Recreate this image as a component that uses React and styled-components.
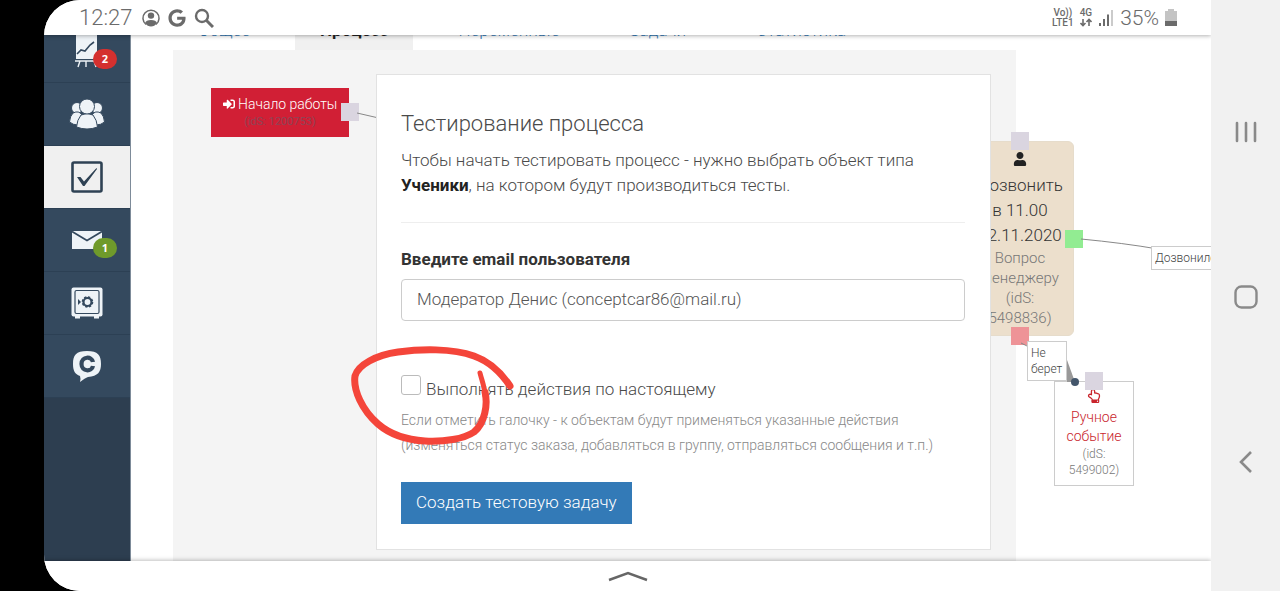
import React, { useState } from "react";
import styled, { createGlobalStyle, ThemeProvider } from "styled-components";
import { FaGoogle, FaUser, FaSignInAlt, FaRegHandPointUp } from "react-icons/fa";

const theme = {
  text: "#4a4a4a",
  muted: "#888",
  link: "#337ab7",
  danger: "#d11f35",
  menu: "#34495e",
  menuDark: "#2d3e50",
  system: "#6b6b6b"
};

const GlobalStyle = createGlobalStyle`
  * {
    box-sizing: border-box;
  }

  body {
    margin: 0;
    background: #000;
    font-family: Roboto, "Noto Sans", sans-serif;
    font-weight: 300;
  }
`;

const Device = styled.div`
  display: flex;
  height: 100vh;
  padding-left: 44px;
  background: #000;
  overflow: hidden;
`;

const Screen = styled.div`
  position: relative;
  flex: 1;
  min-width: 0;
  display: flex;
  flex-direction: column;
  background: #fff;
  border-radius: 36px 0 0 36px;
  overflow: hidden;
`;

const StatusBar = styled.header`
  position: relative;
  z-index: 3;
  flex: none;
  display: flex;
  align-items: center;
  justify-content: space-between;
  height: 35px;
  padding: 0 34px 0 35px;
  background: #fff;
  color: ${props => props.theme.system};
  box-shadow: 0 1px 4px rgba(0, 0, 0, 0.3);
`;

const StatusGroup = styled.div`
  display: flex;
  align-items: center;
  gap: ${props => props.$gap}px;
`;

const Clock = styled.time`
  font-size: 22px;
  margin-right: 2px;
`;

const Percent = styled.span`
  font-size: 21px;
`;

const Carrier = styled.span`
  display: flex;
  flex-direction: column;
  align-items: center;
  font-size: 10px;
  font-weight: 500;
  line-height: 10px;
`;

const Viewport = styled.div`
  flex: 1;
  min-height: 0;
  display: flex;
  overflow: hidden;
`;

const Sidebar = styled.nav`
  flex: none;
  width: 87px;
  background: ${props => props.theme.menuDark};
  border-right: 1px solid #7d8b99;
`;

const MenuList = styled.div`
  margin-top: -15px;
`;

const MenuItem = styled.a`
  display: flex;
  align-items: center;
  justify-content: center;
  height: 63px;
  background: ${props => (props.$active ? "#f0f0f0" : props.theme.menu)};
  border-bottom: 1px solid #2c4054;
`;

const MenuIcon = styled.span`
  position: relative;
  display: flex;
`;

const Badge = styled.span`
  position: absolute;
  left: 22px;
  bottom: ${props => props.$drop}px;
  width: 24px;
  height: 20px;
  border-radius: 10px;
  background: ${props => props.$color};
  color: #fff;
  font: 700 11px/20px "Open Sans", sans-serif;
  text-align: center;
`;

const Page = styled.main`
  flex: 1;
  min-width: 0;
  margin-top: -27px;
  padding: 0 195px 0 42px;
`;

const Tabs = styled.div`
  display: flex;
  gap: 20px;
  height: 42px;
`;

const Tab = styled.a`
  padding: 0 25px;
  font-size: 17px;
  line-height: 45px;
  white-space: nowrap;
  text-decoration: none;
  font-weight: ${props => (props.$active ? 700 : 300)};
  color: ${props => (props.$active ? "#222" : props.theme.link)};
  background: ${props => (props.$active ? "#f0f0f0" : "none")};
`;

const Canvas = styled.section`
  position: relative;
  min-height: 560px;
  background: #f4f4f4;
`;

const Wires = styled.svg`
  position: absolute;
  left: 0;
  top: 0;
  overflow: visible;
`;

const Node = styled.div`
  position: absolute;
  left: ${props => props.$x}px;
  top: ${props => props.$y}px;
  width: ${props => props.$w}px;
  text-align: center;
`;

const StartNode = styled(Node)`
  height: 49px;
  padding-top: 6px;
  background: ${props => props.theme.danger};
  color: #fff;
  font-size: 14px;
  line-height: 20px;

  svg {
    vertical-align: -1px;
  }
`;

const StartId = styled.div`
  color: #8f4455;
  font-size: 11px;
  font-weight: 400;
  line-height: 16px;
`;

const QuestionNode = styled(Node)`
  padding: 6px 10px 7px;
  border-radius: 6px;
  border: 1px solid #e6dccb;
  background: #ecdfcc;
  color: #333;
  font-size: 17px;
  line-height: 25px;
`;

const QuestionInfo = styled.div`
  color: #777;
  font-size: 15px;
  line-height: 20px;
`;

const ManualNode = styled(Node)`
  padding: 7px 8px;
  border: 1px solid #ccc;
  background: #fff;
  color: #c9252d;
  font-size: 14px;
  line-height: 19px;
`;

const ManualId = styled.div`
  color: #777;
  font-size: 12px;
  line-height: 16px;
`;

const WireLabel = styled(Node)`
  padding: 3px;
  border: 1px solid #ccc;
  background: #fff;
  color: #444;
  font-size: 12px;
  line-height: 16px;
  text-align: left;
`;

const Port = styled.i`
  position: absolute;
  left: ${props => props.$x}px;
  top: ${props => props.$y}px;
  width: 18px;
  height: 18px;
  background: ${props => props.$color || "#dad5e0"};
`;

const Modal = styled.form`
  position: absolute;
  z-index: 1;
  top: 24px;
  left: 203px;
  right: 25px;
  padding: 36px 25px 25px 24px;
  border: 1px solid #e2e2e2;
  background: #fff;
  color: ${props => props.theme.text};
  font-size: 17px;
  line-height: 25px;
`;

const Title = styled.h1`
  margin: 0 0 12px;
  font-size: 22px;
  font-weight: 300;
  line-height: 25px;
`;

const Lead = styled.p`
  margin: 0;

  b {
    color: #222;
    font-weight: 700;
  }
`;

const Divider = styled.hr`
  margin: 24px 0;
  border: 0;
  border-top: 1px solid #eee;
`;

const FieldLabel = styled.label`
  display: block;
  margin-bottom: 7px;
  color: #333;
  font-weight: 700;
`;

const TextField = styled.input`
  display: block;
  width: 100%;
  height: 42px;
  padding: 0 15px 2px;
  border: 1px solid #ccc;
  border-radius: 4px;
  background: #fff;
  color: #555;
  font: inherit;
`;

const CheckRow = styled.div`
  display: flex;
  gap: 5px;
  margin-top: 54px;

  label {
    padding-top: 2px;
  }
`;

const CheckBox = styled.input`
  appearance: none;
  flex: none;
  width: 20px;
  height: 20px;
  margin: 0;
  border: 1px solid #bbb;
  border-radius: 3px;
  background: #fff;

  &:checked {
    background: ${props => props.theme.link};
  }
`;

const Help = styled.p`
  margin: 6px 0 24px;
  color: ${props => props.theme.muted};
  font-size: 14px;
`;

const Submit = styled.button`
  display: block;
  height: 42px;
  padding: 0 15px 2px;
  border: 0;
  background: ${props => props.theme.link};
  color: #fff;
  font: inherit;
`;

const BottomBar = styled.footer`
  position: relative;
  z-index: 3;
  flex: none;
  display: flex;
  align-items: center;
  justify-content: center;
  height: 30px;
  background: #fff;
  box-shadow: 0 -1px 4px rgba(0, 0, 0, 0.25);
`;

const NavBar = styled.nav`
  flex: none;
  display: flex;
  flex-direction: column;
  align-items: center;
  justify-content: space-between;
  width: 69px;
  padding: 112px 0 109px;
  background: #f1f1f1;
`;

const NavButton = styled.button`
  display: flex;
  align-items: center;
  justify-content: center;
  width: 40px;
  height: 40px;
  padding: 0;
  border: 0;
  background: none;
`;

const Marker = styled.svg`
  position: absolute;
  z-index: 2;
  left: 300px;
  top: 335px;
  pointer-events: none;
`;

const menu = [
  { id: "stats", label: "Статистика", icon: <BoardIcon />, badge: 2, color: "#d4302f", drop: 1 },
  { id: "users", label: "Пользователи", icon: <UsersIcon /> },
  { id: "tasks", label: "Задачи", icon: <TaskIcon />, active: true },
  { id: "mail", label: "Сообщения", icon: <MailIcon />, badge: 1, color: "#6f9a2b", drop: -8 },
  { id: "safe", label: "Продажи", icon: <SafeIcon /> },
  { id: "chat", label: "Чат", icon: <ChatIcon /> }
];

const tabs = ["Общее", "Процесс", "Переменные", "Задачи", "Статистика"];

export default function App() {
  return (
    <ThemeProvider theme={theme}>
      <GlobalStyle />
      <Device>
        <Screen>
          <Status />
          <Viewport>
            <Sidebar>
              <MenuList>
                {menu.map(item => (
                  <MenuItem key={item.id} href={"#" + item.id} aria-label={item.label} $active={item.active}>
                    <MenuIcon>
                      {item.icon}
                      {item.badge && <Badge $color={item.color} $drop={item.drop}>{item.badge}</Badge>}
                    </MenuIcon>
                  </MenuItem>
                ))}
              </MenuList>
            </Sidebar>
            <Page>
              <Tabs>
                {tabs.map(name => (
                  <Tab key={name} href="#tab" $active={name === "Процесс"}>{name}</Tab>
                ))}
              </Tabs>
              <Canvas>
                <Process />
                <TestForm />
              </Canvas>
            </Page>
          </Viewport>
          <BottomBar>
            <svg width="40" height="12" viewBox="0 0 40 12" fill="none" stroke="#666" strokeWidth="2.4">
              <path d="M1 10 L20 3 L39 10" />
            </svg>
          </BottomBar>
          <Marker width="180" height="120" viewBox="344 335 180 120" fill="none" stroke="#f4453a" strokeLinecap="round" strokeLinejoin="round">
            <path strokeWidth="7" d="M510 386 C502 374 491 362 474 356 C452 348 420 349 398 352 C376 355 358 365 355 376 C353 390 362 410 378 424 C392 436 408 440 425 441 C444 442 464 439 474 432 C485 423 488 404 485 392" />
            <path strokeWidth="5" d="M485 396 C485 388 482 381 480 373" />
          </Marker>
        </Screen>
        <NavBar>
          <NavButton aria-label="Недавние">
            <svg width="24" height="24" fill="none" stroke="#8a8a8a" strokeWidth="2.6" strokeLinecap="round">
              <path d="M3 3V21M12 3V21M21 3V21" />
            </svg>
          </NavButton>
          <NavButton aria-label="Домой">
            <svg width="26" height="26" fill="none" stroke="#8a8a8a" strokeWidth="2.4">
              <rect x="2.5" y="2.5" width="21" height="21" rx="6" />
            </svg>
          </NavButton>
          <NavButton aria-label="Назад">
            <svg width="24" height="24" fill="none" stroke="#8a8a8a" strokeWidth="2.6">
              <path d="M17 2 L7 12 L17 22" />
            </svg>
          </NavButton>
        </NavBar>
      </Device>
    </ThemeProvider>
  );
}

function Status() {
  return (
    <StatusBar>
      <StatusGroup $gap={8}>
        <Clock>12:27</Clock>
        <svg width="18" height="18" viewBox="0 0 18 18" fill="currentColor">
          <path d="M4 15.5 A8 8 0 1 1 14 15.5" fill="none" stroke="currentColor" strokeWidth="1.5" />
          <circle cx="9" cy="6.6" r="3.2" />
          <path d="M3 14 Q4 11 9 11 Q14 11 15 14 Q12.5 17.5 9 17.5 Q5.5 17.5 3 14Z" />
        </svg>
        <FaGoogle size={18} />
        <svg width="20" height="20" fill="none" stroke="currentColor" strokeWidth="2.4">
          <circle cx="8" cy="8" r="6" />
          <path d="M12.5 12.5 L19 19" strokeWidth="3" />
        </svg>
      </StatusGroup>
      <StatusGroup $gap={6}>
        <Carrier><span>Vo))</span><span>LTE1</span></Carrier>
        <Carrier>
          <span>4G</span>
          <svg width="12" height="9" fill="none" stroke="currentColor" strokeWidth="1.6">
            <path d="M3 1V7.5M0.5 5L3 7.5L5.5 5M9 8V1.5M6.5 4L9 1.5L11.5 4" />
          </svg>
        </Carrier>
        <svg width="16" height="18" fill="currentColor">
          <path d="M1 14h2v3H1zM5 10h2v7H5zM9 5.5h2V17H9z" />
          <path d="M13 1h2v16h-2z" opacity=".35" />
        </svg>
        <Percent>35%</Percent>
        <svg width="12" height="18" fill="currentColor">
          <path d="M0 2H3V0H9V2H12V12H0z" opacity=".4" />
          <path d="M0 12H12V17H0z" />
        </svg>
      </StatusGroup>
    </StatusBar>
  );
}

function Process() {
  return (
    <>
      <StartNode $x={38} $y={38} $w={138}>
        <FaSignInAlt size={12} /> Начало работы
        <StartId>(idS: 1200753)</StartId>
      </StartNode>
      <QuestionNode $x={793} $y={91} $w={108}>
        <FaUser size={14} color="#222" />
        <div>Дозвонить</div>
        <div>в 11.00</div>
        <div>12.11.2020</div>
        <QuestionInfo>Вопрос менеджеру (idS: 5498836)</QuestionInfo>
      </QuestionNode>
      <ManualNode $x={881} $y={331} $w={80}>
        <FaRegHandPointUp size={14} />
        <div>Ручное событие</div>
        <ManualId>(idS: 5499002)</ManualId>
      </ManualNode>
      <Port $x={168} $y={53} />
      <Port $x={838} $y={82} />
      <Port $x={892} $y={180} $color="#92ec92" />
      <Port $x={838} $y={277} $color="#ee9397" />
      <Port $x={912} $y={322} />
      <Wires width="10" height="10" fill="none" stroke="#888">
        <path d="M184 63 L210 69" />
        <path d="M908 189 Q950 193 985 199" />
        <path d="M848 293 L858 298" />
        <path d="M894 310 L894 332 L902 332Z" fill="#999" stroke="none" />
        <circle cx="902" cy="332" r="4" fill="#43566b" stroke="none" />
      </Wires>
      <WireLabel $x={978} $y={196} $w={70}>Дозвонился</WireLabel>
      <WireLabel $x={854} $y={291} $w={40}>Не берет</WireLabel>
    </>
  );
}

function TestForm() {
  const [email, setEmail] = useState("Модератор Денис (conceptcar86@mail.ru)");
  const [real, setReal] = useState(false);

  return (
    <Modal onSubmit={e => e.preventDefault()}>
      <Title>Тестирование процесса</Title>
      <Lead>
        Чтобы начать тестировать процесс - нужно выбрать объект типа <b>Ученики</b>, на котором будут производиться тесты.
      </Lead>
      <Divider />
      <FieldLabel htmlFor="email">Введите email пользователя</FieldLabel>
      <TextField id="email" value={email} onChange={e => setEmail(e.target.value)} />
      <CheckRow>
        <CheckBox id="real" type="checkbox" checked={real} onChange={e => setReal(e.target.checked)} />
        <label htmlFor="real">Выполнять действия по настоящему</label>
      </CheckRow>
      <Help>
        Если отметить галочку - к объектам будут применяться указанные действия
        (изменяться статус заказа, добавляться в группу, отправляться сообщения и т.п.)
      </Help>
      <Submit type="submit">Создать тестовую задачу</Submit>
    </Modal>
  );
}

function BoardIcon() {
  return (
    <svg width="32" height="38" viewBox="0 0 32 38">
      <path d="M5 0H26V27H5z" fill="#eef3f7" />
      <path d="M6 22 L10 18 L14 19 L19 13 L23 10" fill="none" stroke="#34495e" strokeWidth="1.6" />
      <path d="M4 29H27M9 29L7 35M15 29V35M23 29L25 35" fill="none" stroke="#eef3f7" strokeWidth="1.4" />
    </svg>
  );
}

function UsersIcon() {
  return (
    <svg width="36" height="32" viewBox="0 0 36 32" fill="#eef3f7" stroke="#34495e" strokeWidth="1">
      <circle cx="8" cy="10" r="5.5" />
      <circle cx="28" cy="10" r="5.5" />
      <path d="M4 15 Q10 12 13 17 L9 27 Q4 27 0.5 24 Q1 18 4 15Z" />
      <path d="M32 15 Q26 12 23 17 L27 27 Q32 27 35.5 24 Q35 18 32 15Z" />
      <path d="M12 17 Q18 14 24 17 Q28 22 28.5 29 Q18 33 7.5 29 Q8 22 12 17Z" />
      <circle cx="18" cy="8.5" r="7.5" />
    </svg>
  );
}

function TaskIcon() {
  return (
    <svg width="32" height="32" viewBox="0 0 32 32">
      <rect x="1.5" y="1.5" width="29" height="29" rx="1.5" fill="none" stroke="#2f4254" strokeWidth="2.6" />
      <path d="M6 16 L9.5 16 L13 20.5 L25.5 7 L26 8 L13.5 25 L12 25Z" fill="#2f4254" />
    </svg>
  );
}

function MailIcon() {
  return (
    <svg width="32" height="20" viewBox="0 0 32 20">
      <path d="M1 1H31V19H1z" fill="#eef3f7" />
      <path d="M1 1.5 L16 10.5 L31 1.5" fill="none" stroke="#34495e" strokeWidth="1.8" />
    </svg>
  );
}

function SafeIcon() {
  return (
    <svg width="32" height="32" viewBox="0 0 32 32">
      <rect x="0.5" y="0.5" width="31" height="29" rx="2" fill="#eef3f7" />
      <path d="M4 29H9V31.5H4zM23 29H28V31.5H23z" fill="#eef3f7" />
      <rect x="4" y="3.5" width="24" height="23" rx="1.5" fill="none" stroke="#34495e" strokeWidth="1.2" />
      <circle cx="16.5" cy="15" r="4" fill="none" stroke="#34495e" strokeWidth="2.2" />
      <circle cx="16.5" cy="15" r="5" fill="none" stroke="#34495e" strokeWidth="1.6" strokeDasharray="2.3 1.6" />
      <path d="M7 12 L10 15 L7 18Z" fill="#34495e" />
    </svg>
  );
}

function ChatIcon() {
  return (
    <svg width="30" height="34" viewBox="0 0 30 34">
      <path d="M15 2 C26 2 29 6 29 15 C29 23 26 27 16 28 Q13 29 8 33 Q9 30 8 27 C3 25 1 22 1 15 C1 6 4 2 15 2Z" fill="#eef3f7" />
      <path d="M21 13 C20 7 9.5 7 9.5 15 C9.5 23 20 23 21 17" fill="none" stroke="#34495e" strokeWidth="4.2" />
    </svg>
  );
}
